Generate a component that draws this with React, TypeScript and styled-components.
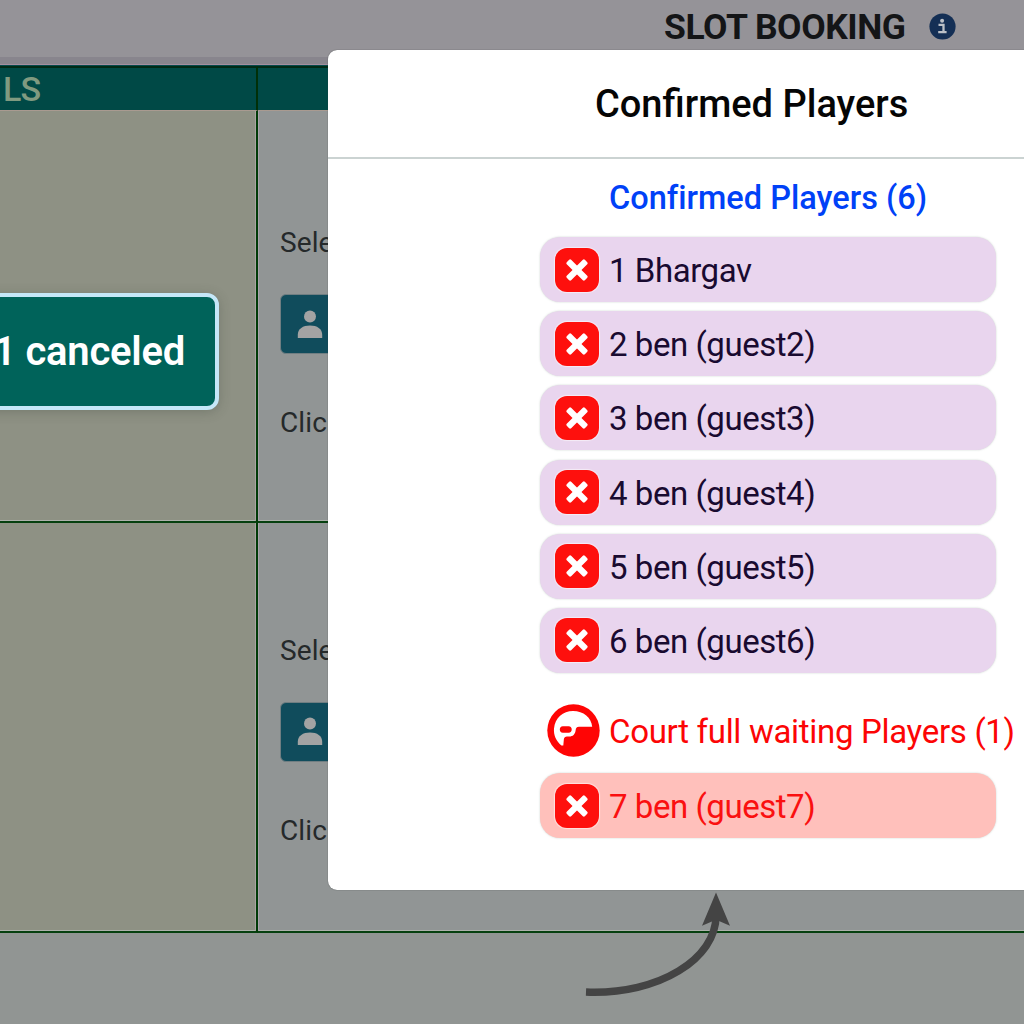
import React from "react";
import styled, { createGlobalStyle } from "styled-components";

const GlobalStyle = createGlobalStyle`
  *, *::before, *::after { box-sizing: border-box; }
  body { margin: 0; overflow: hidden; background: #929694; font-family: Roboto, "Liberation Sans", sans-serif; }
`;

const Screen = styled.div`
  position: relative;
  display: flex;
  flex-direction: column;
  width: 1024px;
  height: 1024px;
  overflow: hidden;
  background: #919593;
`;

const TopBar = styled.header`
  display: flex;
  flex: none;
  align-items: flex-start;
  gap: 23.5px;
  height: 66px;
  padding: 6px 0 0 664px;
  background: linear-gradient(#959398 0 57px, #88858d 57px 64px, #a58f9f 64px 65px, #064a4b 65px);
`;

const PageTitle = styled.h1`
  margin: 0;
  color: #141517;
  font-size: 35.5px;
  font-weight: 700;
  line-height: 43px;
  letter-spacing: -0.45px;
  white-space: nowrap;
`;

const InfoIcon = styled.svg`
  width: 27px;
  height: 27px;
  margin-top: 7px;
`;

const Table = styled.main`
  display: grid;
  flex: none;
  grid-template-columns: 258px 1fr;
  grid-template-rows: 45px 412px 410px;
`;

const HeadCell = styled.div<{ $divided?: boolean }>`
  padding-left: 3px;
  border-top: 2px solid #002b16;
  border-bottom: 1px solid #a99a90;
  border-right: ${(p) => (p.$divided ? "2px solid #003008" : "0")};
  background: #004946;
  color: #809a80;
  font-size: 34px;
  font-weight: 500;
  line-height: 42px;
  letter-spacing: -0.9px;
`;

const DetailCell = styled.div`
  border-right: 2px solid #003b06;
  border-bottom: 2px solid #06400f;
  background: #8e9184;
  box-shadow: inset -1px 0 #aaa4a1, inset 0 -1px #aeb1ac;
`;

const SlotCell = styled.div<{ $top: number }>`
  display: flex;
  flex-direction: column;
  align-items: flex-start;
  padding: ${(p) => p.$top}px 0 0 22px;
  border-bottom: 2px solid #06400f;
  background: #919595;
  box-shadow: inset 1px 0 #aaa3ac, inset 0 -1px #aeb1ac;
  color: #25292a;
  font-size: 28px;
  line-height: 34px;
`;

const SlotText = styled.p`
  margin: 0;
  letter-spacing: 0.1px;
`;

const PlayerButton = styled.button`
  display: flex;
  align-items: center;
  width: 150px;
  height: 60px;
  margin: 34px 0 52px;
  padding: 0 0 0 16px;
  border: 1px solid #707e82;
  border-radius: 6px;
  background: #104c5c;
`;

const Toast = styled.div`
  position: absolute;
  top: 293px;
  left: -200px;
  display: flex;
  align-items: center;
  justify-content: flex-end;
  width: 419px;
  height: 117px;
  padding: 0 30px 1px 0;
  border: 4px solid #c5e7f8;
  border-radius: 12px;
  background: #00635a;
  box-shadow: 0 2px 12px rgba(45, 55, 45, 0.25);
  color: #fff;
  font-size: 40px;
  font-weight: 600;
  letter-spacing: -0.25px;
  white-space: nowrap;
`;

const Modal = styled.section`
  position: absolute;
  top: 50px;
  left: 328px;
  width: 846px;
  height: 840px;
  border-radius: 9px;
  background: #fff;
  box-shadow: 0 0 1px #34393b;
`;

const ModalHeader = styled.header`
  height: 109px;
  padding: 31px 0 0 267px;
  border-bottom: 2px solid #cbd3d2;
`;

const ModalTitle = styled.h2`
  margin: 0;
  color: #050505;
  font-size: 38px;
  font-weight: 500;
  line-height: 47px;
  white-space: nowrap;
`;

const ModalBody = styled.div`
  display: flex;
  flex-direction: column;
  padding-left: 212px;
`;

const ConfirmedHeading = styled.h3`
  margin: 19px 0 19px 69px;
  color: #0041f7;
  font-size: 32.5px;
  font-weight: 500;
  line-height: 40px;
  letter-spacing: 0.01px;
  white-space: nowrap;
`;

const PlayerList = styled.ul`
  display: flex;
  flex-direction: column;
  gap: 9.2px;
  margin: 0;
  padding: 0;
  list-style: none;
`;

const PlayerRow = styled.li<{ $waiting?: boolean }>`
  display: flex;
  align-items: center;
  gap: 10px;
  width: 456px;
  height: 65px;
  padding-left: 15px;
  border-radius: 20px;
  background: ${(p) => (p.$waiting ? "#ffc0bb" : "#e9d5ee")};
  box-shadow: 0 0 2px rgba(95, 120, 105, 0.35);
  color: ${(p) => (p.$waiting ? "#fa1010" : "#190a30")};
  font-size: 33px;
  line-height: 40px;
  letter-spacing: -0.45px;
  white-space: nowrap;
`;

const PlayerName = styled.span`
  padding-top: 3px;
`;

const RemoveButton = styled.button`
  display: grid;
  flex: none;
  place-items: center;
  width: 44px;
  height: 44px;
  padding: 0;
  border: 0;
  border-radius: 12px;
  background: #fe100d;
  box-shadow: 0 0 1px 1px rgba(255, 255, 255, 0.55);
`;

const WaitingHeading = styled.div`
  display: flex;
  align-items: center;
  gap: 9px;
  height: 54px;
  margin: 31px 0 15.5px 7px;
  color: #fc0505;
  font-size: 33px;
  line-height: 40px;
  letter-spacing: -0.31px;
  white-space: nowrap;
`;

const Arrow = styled.svg`
  position: absolute;
  top: 888px;
  left: 580px;
  width: 160px;
  height: 115px;
`;

const players = ["1 Bhargav", "2 ben (guest2)", "3 ben (guest3)", "4 ben (guest4)", "5 ben (guest5)", "6 ben (guest6)"];

function Player({ name, waiting }: { name: string; waiting?: boolean }) {
  return (
    <PlayerRow $waiting={waiting}>
      <RemoveButton aria-label="Remove">
        <svg width="24" height="24" viewBox="0 0 24 24" fill="#fff">
          <g transform="rotate(45 12 12)">
            <rect x="-.8" y="8.9" width="25.6" height="6.2" rx="1.4" />
            <rect x="8.9" y="-.8" width="6.2" height="25.6" rx="1.4" />
          </g>
        </svg>
      </RemoveButton>
      <PlayerName>{name}</PlayerName>
    </PlayerRow>
  );
}

function Slot({ top }: { top: number }) {
  return (
    <SlotCell $top={top}>
      <SlotText>Select Player</SlotText>
      <PlayerButton aria-label="Player">
        <svg width="26" height="29" viewBox="0 0 26 29" fill="#a3a3a3">
          <circle cx="13" cy="6.5" r="6" />
          <path d="M.8 28v-3.2c0-6 5.1-9.3 12.2-9.3s12.2 3.3 12.2 9.3V28Z" />
        </svg>
      </PlayerButton>
      <SlotText>Click</SlotText>
    </SlotCell>
  );
}

export default function App() {
  return (
    <>
      <GlobalStyle />
      <Screen>
        <TopBar>
          <PageTitle>SLOT BOOKING</PageTitle>
          <InfoIcon viewBox="0 0 27 27">
            <circle cx="13.5" cy="13.5" r="13.1" fill="#142f55" />
            <circle cx="13.1" cy="7.7" r="2" fill="#bbc0c7" />
            <path d="M9.5 11.9h5v7.2M9.2 19.1h8.4" fill="none" stroke="#bbc0c7" strokeWidth="2.3" />
          </InfoIcon>
        </TopBar>
        <Table>
          <HeadCell $divided>LS</HeadCell>
          <HeadCell />
          <DetailCell />
          <Slot top={115} />
          <DetailCell />
          <Slot top={110.5} />
        </Table>
        <Arrow viewBox="0 0 160 115">
          <path d="M6 104C80 107 136 70 136 28" fill="none" stroke="#444" strokeWidth="7.5" />
          <path d="m136 4-14 34 14-6 14 6Z" transform="translate(0 .5) scale(1 .98)" fill="#444" />
        </Arrow>
        <Toast>1 canceled</Toast>
        <Modal>
          <ModalHeader>
            <ModalTitle>Confirmed Players</ModalTitle>
          </ModalHeader>
          <ModalBody>
            <ConfirmedHeading>Confirmed Players (6)</ConfirmedHeading>
            <PlayerList>
              {players.map((name) => (
                <Player key={name} name={name} />
              ))}
            </PlayerList>
            <WaitingHeading>
              <svg width="53" height="53" viewBox="0 0 53 53">
                <circle cx="26.5" cy="26.5" r="26.2" fill="#ff0505" />
                <path
                  fill="#fff"
                  fillRule="evenodd"
                  d="M7 24.5C8 14 16 7 26 7c10.5 0 18.5 6.5 19.2 15.8H32c-2.6 0-3 1.2-3.4 3.8-.6 3.9-2.6 6-6.4 6-3.6 0-5.2.4-5.4 3.4l-.5 5.6h-1.9C9 37 6.4 30.8 7 24.5Zm8.8-2.3c-4 0-4 6.6 0 6.6h5.8c4.2 0 4.2-6.6 0-6.6Z"
                />
              </svg>
              <PlayerName>Court full waiting Players (1)</PlayerName>
            </WaitingHeading>
            <PlayerList>
              <Player name="7 ben (guest7)" waiting />
            </PlayerList>
          </ModalBody>
        </Modal>
      </Screen>
    </>
  );
}
